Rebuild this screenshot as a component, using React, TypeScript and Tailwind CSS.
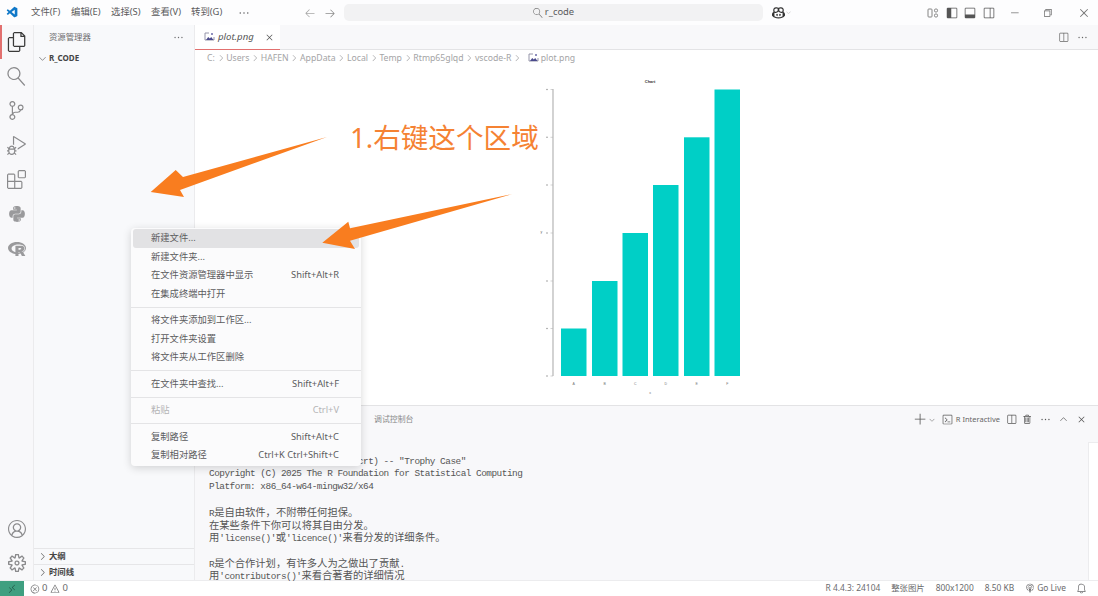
import {
  VscAccount, VscAdd, VscArrowLeft, VscArrowRight, VscBell, VscBroadcast, VscChevronDown, VscChevronRight,
  VscChevronUp, VscChromeClose, VscChromeMinimize, VscChromeRestore, VscClose, VscCopilot, VscDebugAlt,
  VscEllipsis, VscError, VscExtensions, VscFiles, VscLayoutPanel, VscLayoutSidebarLeft,
  VscLayoutSidebarRightOff, VscRemote, VscSearch, VscSettingsGear, VscSourceControl, VscSplitHorizontal,
  VscTerminal, VscTrash, VscVscode, VscWarning,
} from 'react-icons/vsc'
import { FaPython, FaRProject } from 'react-icons/fa'

const menus = ['文件(F)', '编辑(E)', '选择(S)', '查看(V)', '转到(G)']
const crumbs = ['C:', 'Users', 'HAFEN', 'AppData', 'Local', 'Temp', 'Rtmp65glqd', 'vscode-R']
const bars = [
  { x: 27, top: 261.5 },
  { x: 58, top: 214 },
  { x: 88.5, top: 166 },
  { x: 119, top: 118 },
  { x: 150, top: 70.3 },
  { x: 180.5, top: 22.5 },
]
const barLabels = ['A', 'B', 'C', 'D', 'E', 'F']

const terminalLines = [
  'R version 4.4.3 (2025-02-28 ucrt) -- "Trophy Case"',
  'Copyright (C) 2025 The R Foundation for Statistical Computing',
  'Platform: x86_64-w64-mingw32/x64',
  '',
  'R是自由软件，不附带任何担保。',
  '在某些条件下你可以将其自由分发。',
  "用'license()'或'licence()'来看分发的详细条件。",
  '',
  'R是个合作计划，有许多人为之做出了贡献.',
  "用'contributors()'来看合著者的详细情况",
]

function ImageIcon() {
  return (
    <svg width="11" height="10" viewBox="0 0 11 10" fill="none" className="shrink-0">
      <path d="M5 1H1v7h9V5" stroke="#8a8aa0" strokeWidth="0.9" />
      <path d="M2 8l2.2-3 1.6 1.6L7.2 5 9.5 8z" fill="#4a4a8c" />
      <circle cx="8" cy="2" r="1" fill="#6a6aa8" />
    </svg>
  )
}

function TerminalLine({ text }: { text: string }) {
  // CJK glyphs are double width in the terminal, so they get their own size
  const parts = text.split(/([^\x00-\x7f]+)/)
  return (
    <div className="h-[12.6px] whitespace-pre">
      {parts.map((part, i) =>
        i % 2 === 1 ? (
          <span key={i} className="text-[10.3px] tracking-normal font-['Noto_Sans_CJK_SC',sans-serif]">
            {part}
          </span>
        ) : (
          <span key={i}>{part}</span>
        ),
      )}
    </div>
  )
}

function MenuRow({ label, keys, active, disabled }: { label: string; keys?: string; active?: boolean; disabled?: boolean }) {
  return (
    <div
      className={`mx-[2px] h-[18.5px] flex items-center justify-between pl-[18px] pr-[20px] rounded-[3px] ${active ? 'bg-[#e2e2e4]' : ''} ${disabled ? 'text-[#b4b4b6]' : 'text-[#5c5c5e]'}`}
    >
      <span>{label}</span>
      {keys && <span>{keys}</span>}
    </div>
  )
}

function MenuSep() {
  return <div className="h-[8px] flex items-center"><div className="w-full h-px bg-[#e4e4e6]" /></div>
}

function ContextMenu() {
  return (
    <div className="absolute left-[131px] top-[228px] w-[230px] h-[238px] pt-[1px] bg-[#fbfbfc] rounded-[4px] shadow-[0_2px_8px_rgba(0,0,0,0.16)] text-[9.3px]">
      <MenuRow label="新建文件..." active />
      <MenuRow label="新建文件夹..." />
      <MenuRow label="在文件资源管理器中显示" keys="Shift+Alt+R" />
      <MenuRow label="在集成终端中打开" />
      <MenuSep />
      <MenuRow label="将文件夹添加到工作区..." />
      <MenuRow label="打开文件夹设置" />
      <MenuRow label="将文件夹从工作区删除" />
      <MenuSep />
      <MenuRow label="在文件夹中查找..." keys="Shift+Alt+F" />
      <MenuSep />
      <MenuRow label="粘贴" keys="Ctrl+V" disabled />
      <MenuSep />
      <MenuRow label="复制路径" keys="Shift+Alt+C" />
      <MenuRow label="复制相对路径" keys="Ctrl+K Ctrl+Shift+C" />
    </div>
  )
}

function Chart() {
  return (
    <svg width="225" height="338" viewBox="0 0 225 338" className="shrink-0">
      <text x="116" y="16" textAnchor="middle" fontSize="4" fontWeight="700" fill="#333" fontFamily="Liberation Sans">Chart</text>
      <line x1="19" y1="22" x2="19" y2="309" stroke="#b5b5b5" strokeWidth="1.2" />
      {[22.5, 70.3, 118, 166, 214, 261.5, 309].map((y) => (
        <g key={y}>
          <line x1="16.5" y1={y} x2="19" y2={y} stroke="#b5b5b5" strokeWidth="0.6" />
          <circle cx="13" cy={y} r="0.8" fill="#999" />
        </g>
      ))}
      <text x="6.5" y="166" fontSize="3.5" fill="#666" fontFamily="Liberation Sans">y</text>
      {bars.map((b, i) => (
        <g key={barLabels[i]}>
          <rect x={b.x} y={b.top} width="25.5" height={309 - b.top} fill="#00cfc6" />
          <text x={b.x + 12.7} y="318" textAnchor="middle" fontSize="3.5" fill="#777" fontFamily="Liberation Sans">{barLabels[i]}</text>
        </g>
      ))}
      <text x="116" y="327" textAnchor="middle" fontSize="3.5" fill="#777" fontFamily="Liberation Sans">x</text>
    </svg>
  )
}

export default function App() {
  return (
    <div className="relative w-[1098px] h-[596px] overflow-hidden flex flex-col bg-white text-[#616161] font-['Noto_Sans','Noto_Sans_CJK_SC',sans-serif]">
      {/* Title bar */}
      <div className="h-[25px] shrink-0 flex items-center bg-[#fdfdfe] text-[9.4px] text-[#5a5a5c]">
        <VscVscode className="ml-[6px] w-[13px] h-[13px] text-[#0f78c8]" />
        <div className="ml-[12px] flex items-center gap-[12px]">
          {menus.map((m) => (
            <span key={m} className="w-[28px] whitespace-nowrap">{m}</span>
          ))}
        </div>
        <VscEllipsis className="ml-[19px] w-[12px] h-[12px]" />
        <VscArrowLeft className="ml-[54px] w-[12px] h-[12px] text-[#a6a6a6]" />
        <VscArrowRight className="ml-[8px] w-[12px] h-[12px] text-[#8c8c8c]" />
        <div className="ml-[8px] w-[419px] h-[17px] rounded-[5px] bg-[#f2f2f3] flex items-center justify-center gap-[2px]">
          <VscSearch className="w-[10px] h-[10px] -scale-x-100 text-[#777]" />
          <span>r_code</span>
        </div>
        <VscCopilot className="ml-[9px] w-[13px] h-[13px] text-[#333]" />
        <VscChevronDown className="w-[7px] h-[7px] text-[#aaa]" />
        <div className="ml-[135px] flex items-center gap-[6.5px] text-[#555]">
          <svg width="12" height="12" viewBox="0 0 12 12" fill="none" stroke="#777" strokeWidth="0.9">
            <rect x="1" y="2" width="4" height="8" rx="0.8" />
            <rect x="7.5" y="2" width="3" height="3" rx="1.2" />
            <rect x="7.5" y="7" width="3" height="3" rx="1.2" />
          </svg>
          <VscLayoutSidebarLeft className="w-[12px] h-[12px]" />
          <VscLayoutPanel className="w-[12px] h-[12px]" />
          <VscLayoutSidebarRightOff className="w-[12px] h-[12px]" />
        </div>
        <VscChromeMinimize className="ml-[14px] w-[11px] h-[11px] text-[#666]" />
        <VscChromeRestore className="ml-[22px] w-[11px] h-[11px] text-[#666]" />
        <VscChromeClose className="ml-[25px] w-[12px] h-[12px] text-[#777]" />
      </div>

      <div className="flex-1 min-h-0 flex">
        {/* Activity bar */}
        <div className="w-[34px] shrink-0 flex flex-col items-center bg-[#f8f8fa] border-r border-[#ebebed] text-[#8a8a8c]">
          <div className="relative w-full h-[34.4px] flex items-center justify-center text-[#3a3a3a]">
            <div className="absolute left-0 top-0 bottom-0 w-[1.5px] bg-[#e2706f]" />
            <VscFiles className="w-[20px] h-[20px]" />
          </div>
          <div className="h-[34.4px] flex items-center"><VscSearch className="w-[19px] h-[19px] -scale-x-100" /></div>
          <div className="h-[34.4px] flex items-center"><VscSourceControl className="w-[19px] h-[19px]" /></div>
          <div className="h-[34.4px] flex items-center"><VscDebugAlt className="w-[19px] h-[19px]" /></div>
          <div className="h-[34.4px] flex items-center"><VscExtensions className="w-[19px] h-[19px]" /></div>
          <div className="h-[34.4px] flex items-center"><FaPython className="w-[18px] h-[18px] text-[#9a9a9c]" /></div>
          <div className="h-[34.4px] flex items-center"><FaRProject className="w-[18px] h-[18px] text-[#9a9a9c]" /></div>
          <div className="mt-auto h-[34px] flex items-center"><VscAccount className="w-[18px] h-[18px]" /></div>
          <div className="h-[34px] flex items-center"><VscSettingsGear className="w-[18px] h-[18px]" /></div>
        </div>

        {/* Explorer */}
        <div className="w-[161px] shrink-0 flex flex-col bg-[#f8f9fb] border-r border-[#ebebed]">
          <div className="h-[25px] flex items-center justify-between pl-[15px] pr-[10px] text-[8.4px] text-[#6c6c6e]">
            <span>资源管理器</span>
            <VscEllipsis className="w-[11px] h-[11px]" />
          </div>
          <div className="h-[16px] flex items-center pl-[3px] text-[8px] font-bold text-[#444]">
            <VscChevronDown className="w-[11px] h-[11px] mr-[1px] text-[#666]" />
            <span>R_CODE</span>
          </div>
          <div className="mt-auto h-[16px] flex items-center pl-[3px] border-t border-[#e6e6e8] text-[8.4px] font-bold text-[#444]">
            <VscChevronRight className="w-[11px] h-[11px] mr-[1px] text-[#666]" />
            <span>大纲</span>
          </div>
          <div className="h-[16px] flex items-center pl-[3px] border-t border-[#e6e6e8] text-[8.4px] font-bold text-[#444]">
            <VscChevronRight className="w-[11px] h-[11px] mr-[1px] text-[#666]" />
            <span>时间线</span>
          </div>
        </div>

        {/* Editor + panel */}
        <div className="flex-1 min-w-0 flex flex-col">
          <div className="h-[25px] shrink-0 flex items-stretch justify-between bg-[#f8f8fa] border-b border-[#e3e3e5]">
            <div className="w-[85px] -mb-px flex items-center bg-white border-b border-[#e2706f] pl-[9px] pr-[5px]">
              <ImageIcon />
              <span className="ml-[3px] text-[9.6px] italic text-[#555]">plot.png</span>
              <VscClose className="ml-auto w-[11px] h-[11px] text-[#555]" />
            </div>
            <div className="flex items-center gap-[8px] pr-[10px] text-[#666]">
              <VscSplitHorizontal className="w-[11px] h-[11px]" />
              <VscEllipsis className="w-[11px] h-[11px]" />
            </div>
          </div>
          <div className="h-[17px] shrink-0 flex items-center pl-[12px] text-[8.7px] text-[#a4a4a6] whitespace-nowrap">
            {crumbs.map((c) => (
              <span key={c} className="flex items-center">
                {c}
                <VscChevronRight className="mx-[0.7px] w-[10px] h-[10px]" />
              </span>
            ))}
            <span className="ml-[5px] flex items-center gap-[2px]">
              <ImageIcon />
              <span>plot.png</span>
            </span>
          </div>
          <div className="h-[338px] shrink-0 flex justify-center bg-white">
            <Chart />
          </div>
          <div className="flex-1 min-h-0 relative bg-[#f8f8fa] border-t border-[#e3e3e5]">
            <div className="h-[27px] flex items-center pl-[179px] pr-[11px] text-[7.9px] text-[#8a8a8c]">
              <span>调试控制台</span>
              <div className="ml-auto flex items-center text-[#555]">
                <VscAdd className="w-[13px] h-[13px]" />
                <VscChevronDown className="w-[8px] h-[8px] ml-[1px] text-[#888]" />
                <VscTerminal className="ml-[6px] w-[11px] h-[11px]" />
                <span className="ml-[3px] text-[7.5px] text-[#666]">R Interactive</span>
                <VscSplitHorizontal className="ml-[6px] w-[11px] h-[11px]" />
                <VscTrash className="ml-[5px] w-[11px] h-[11px]" />
                <VscEllipsis className="ml-[7px] w-[11px] h-[11px]" />
                <VscChevronUp className="ml-[7px] w-[11px] h-[11px]" />
                <VscClose className="ml-[7px] w-[11px] h-[11px]" />
              </div>
            </div>
            <div className="absolute right-0 top-[36px] bottom-0 w-[10px] bg-white border-l border-t border-[#ececee]" />
            <div className="pl-[14px] pt-[22.8px] h-[148px] overflow-hidden text-[9.4px] tracking-[-0.49px] leading-[12.6px] text-[#555] font-['Liberation_Mono',monospace]">
              {terminalLines.map((line, i) => (
                <TerminalLine key={i} text={line} />
              ))}
            </div>
          </div>
        </div>
      </div>

      {/* Status bar */}
      <div className="h-[16px] shrink-0 flex items-center bg-white border-t border-[#ececee] text-[8.4px] text-[#6a6a6c]">
        <div className="w-[24px] h-full flex items-center justify-center bg-[#3f9f80] text-[#1f4f40]">
          <VscRemote className="w-[10px] h-[10px]" />
        </div>
        <VscError className="ml-[6px] w-[10px] h-[10px]" />
        <span className="ml-[2px] text-[9.5px]">0</span>
        <VscWarning className="ml-[3px] w-[10px] h-[10px]" />
        <span className="ml-[2px] text-[9.5px]">0</span>
        <div className="ml-auto flex items-center gap-[11px] pr-[11px] whitespace-nowrap">
          <span>R 4.4.3: 24104</span>
          <span>整张图片</span>
          <span>800x1200</span>
          <span>8.50 KB</span>
          <span className="flex items-center gap-[2px]">
            <VscBroadcast className="w-[10px] h-[10px]" />
            Go Live
          </span>
          <VscBell className="-ml-[1px] w-[11px] h-[11px]" />
        </div>
      </div>

      <ContextMenu />

      {/* Annotation arrows drawn over the screenshot */}
      <svg className="absolute inset-0 pointer-events-none" width="1098" height="596" viewBox="0 0 1098 596">
        <polygon points="327,137 183,177 175.7,170 150.7,192 184,197 180,190" fill="#f97d1f" />
        <polygon points="512.3,194 350,228.3 348.3,221.7 322.3,242.7 355,249 350,240.7" fill="#f97d1f" />
      </svg>
      <span className="absolute left-[350px] top-[118px] text-[27.6px] leading-[38px] whitespace-nowrap text-[#f58233]">1.右键这个区域</span>
    </div>
  )
}
